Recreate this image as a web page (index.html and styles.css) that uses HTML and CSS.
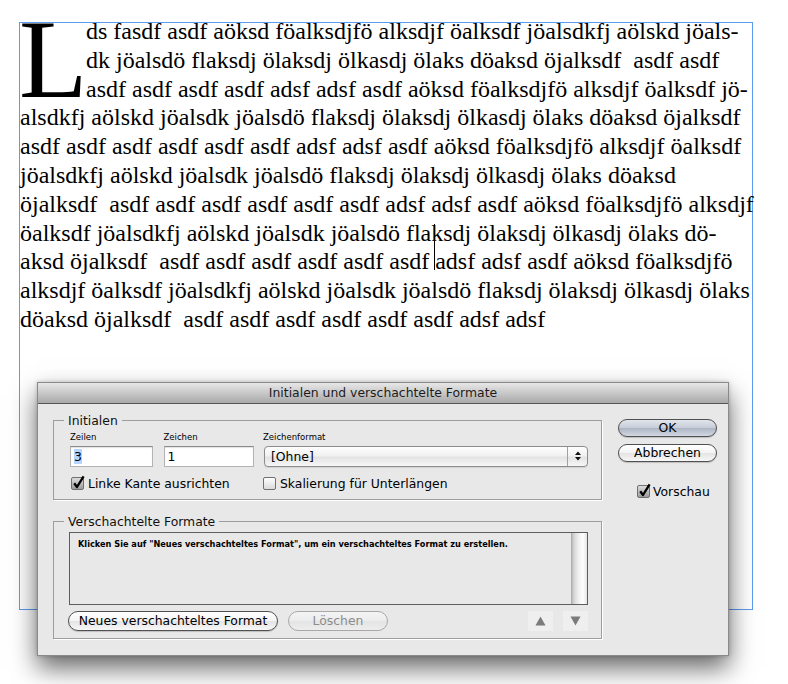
FILE: index.html
```html
<!DOCTYPE html>
<html lang="de">
<head>
    <meta charset="UTF-8">
    <meta name="viewport" content="width=device-width, initial-scale=1.0">
    <title>Initialen und verschachtelte Formate</title>

    <link rel="stylesheet" href="styles.css">
</head>
<body>
    <div class="text-frame">
        <div class="story">
            <span class="initial">L</span>
            <span class="ln">ds fasdf asdf aöksd föalksdjfö alksdjf öalksdf jöalsdkfj aölskd jöals-</span>
            <span class="ln">dk jöalsdö flaksdj ölaksdj ölkasdj ölaks döaksd öjalksdf  asdf asdf</span>
            <span class="ln">asdf asdf asdf asdf adsf adsf asdf aöksd föalksdjfö alksdjf öalksdf jö-</span>
            <span class="ln">alsdkfj aölskd jöalsdk jöalsdö flaksdj ölaksdj ölkasdj ölaks döaksd öjalksdf</span>
            <span class="ln">asdf asdf asdf asdf asdf asdf adsf adsf asdf aöksd föalksdjfö alksdjf öalksdf</span>
            <span class="ln">jöalsdkfj aölskd jöalsdk jöalsdö flaksdj ölaksdj ölkasdj ölaks döaksd</span>
            <span class="ln">öjalksdf  asdf asdf asdf asdf asdf asdf adsf adsf asdf aöksd föalksdjfö alksdjf</span>
            <span class="ln">öalksdf jöalsdkfj aölskd jöalsdk jöalsdö flaksdj ölaksdj ölkasdj ölaks dö-</span>
            <span class="ln">aksd öjalksdf  asdf asdf asdf asdf asdf asdf adsf adsf asdf aöksd föalksdjfö</span>
            <span class="ln">alksdjf öalksdf jöalsdkfj aölskd jöalsdk jöalsdö flaksdj ölaksdj ölkasdj ölaks</span>
            <span class="ln">döaksd öjalksdf  asdf asdf asdf asdf asdf asdf adsf adsf</span>
        </div>
    </div>
    <div class="caret"></div>

    <div class="dialog">
        <div class="titlebar">Initialen und verschachtelte Formate</div>
        <div class="dialog-body">
            <div class="groups">
                <fieldset class="group">
                    <legend>Initialen</legend>
                    <div class="group-inner initials">
                        <div class="fields">
                            <div class="field">
                                <span class="cap">Zeilen</span>
                                <span class="textbox"><span class="sel">3</span></span>
                            </div>
                            <div class="field">
                                <span class="cap">Zeichen</span>
                                <span class="textbox">1</span>
                            </div>
                            <div class="field">
                                <span class="cap cap-shift">Zeichenformat</span>
                                <span class="popup">
                                    <span class="popup-value">[Ohne]</span>
                                    <span class="popup-arrows">
                                        <svg width="6" height="10" viewBox="0 0 6 10"><polygon points="0,4 3,0.5 6,4" fill="#111"/><polygon points="0,6 3,9.5 6,6" fill="#111"/></svg>
                                    </span>
                                </span>
                            </div>
                        </div>
                        <div class="checks">
                            <span class="check">
                                <span class="box checked">
                                    <svg class="tick" width="13" height="15" viewBox="0 0 13 15"><path d="M2.2 8.2 L5 12 L11.6 1.4" fill="none" stroke="#000" stroke-width="2.3" stroke-linejoin="round"/></svg>
                                </span>
                                Linke Kante ausrichten
                            </span>
                            <span class="check">
                                <span class="box"></span>
                                Skalierung für Unterlängen
                            </span>
                        </div>
                    </div>
                </fieldset>

                <fieldset class="group">
                    <legend>Verschachtelte Formate</legend>
                    <div class="group-inner nested">
                        <div class="list">
                            <div class="list-msg">Klicken Sie auf "Neues verschachteltes Format", um ein verschachteltes Format zu erstellen.</div>
                            <div class="scroll"></div>
                        </div>
                        <div class="actions">
                            <button class="pill btn-new">Neues verschachteltes Format</button>
                            <button class="pill btn-del" disabled>Löschen</button>
                            <span class="move">
                                <svg width="11" height="10" viewBox="0 0 11 10"><polygon points="0.5,9.5 5.5,0.5 10.5,9.5" fill="#7b7b7b"/></svg>
                            </span>
                            <span class="move">
                                <svg width="11" height="10" viewBox="0 0 11 10"><polygon points="0.5,0.5 5.5,9.5 10.5,0.5" fill="#7b7b7b"/></svg>
                            </span>
                        </div>
                    </div>
                </fieldset>
            </div>

            <div class="side">
                <button class="pill default">OK</button>
                <button class="pill">Abbrechen</button>
                <span class="check preview">
                    <span class="box checked">
                        <svg class="tick" width="13" height="15" viewBox="0 0 13 15"><path d="M2.2 8.2 L5 12 L11.6 1.4" fill="none" stroke="#000" stroke-width="2.3" stroke-linejoin="round"/></svg>
                    </span>
                    Vorschau
                </span>
            </div>
        </div>
    </div>
</body>
</html>
```

FILE: styles.css
```css
body {
    margin: 0;
    background: #fff;
}

/* text frame with the drop cap */
.text-frame {
    margin: 22px 0 0 19px;
    width: 732px;
    height: 586px;
    border: 1px solid #5b9bf0;
}
.story {
    margin-top: -6px;
    font-family: "Liberation Serif", "Times New Roman", serif;
    font-size: 24px;
    line-height: 28.8px;
    color: #000;
}
.initial {
    float: left;
    width: 67px;
    margin-left: -1px;
    font-size: 112px;
    line-height: 85px;
}
.ln {
    display: block;
    white-space: pre;
}
.caret {
    position: absolute;
    left: 434px;
    top: 224px;
    width: 1px;
    height: 46px;
    background: #000;
}

/* dialog window */
.dialog {
    position: absolute;
    left: 37px;
    top: 382px;
    width: 692px;
    height: 274px;
    box-sizing: border-box;
    border: 1px solid #8a8a8a;
    background: #e8e8e8;
    box-shadow: 0 12px 24px rgba(0, 0, 0, 0.6), 0 0 4px rgba(0, 0, 0, 0.2);
    font-family: "DejaVu Sans", sans-serif;
    font-size: 12.4px;
    color: #000;
}
.titlebar {
    height: 20px;
    line-height: 20px;
    border-bottom: 1px solid #565656;
    background: linear-gradient(#e7e7e7, #a9a9a9);
    text-align: center;
    color: #1c1c1c;
}
.dialog-body {
    display: flex;
    gap: 16px;
    padding: 8.5px 10px 0 15px;
}
.groups {
    width: 549px;
}
.group {
    margin: 0;
    padding: 0;
    min-width: 0;
    border: 1px solid #9d9d9d;
    box-shadow: 1px 1px 0 #fff;
}
.group + .group {
    margin-top: 13.5px;
}
.group legend {
    margin-left: 10px;
    padding: 0 4px;
    line-height: 15px;
    color: #111;
}
.initials {
    padding: 4px 13px 8px 16px;
}
.nested {
    padding: 3.5px 13px 7px 15px;
}

.fields {
    display: grid;
    grid-template-columns: 83px 90px 324px;
    justify-content: space-between;
}
.field {
    display: flex;
    flex-direction: column;
}
.cap {
    font-size: 8.5px;
    line-height: 11px;
    margin-bottom: 3px;
}
.cap-shift {
    margin-left: -1px;
}
.textbox {
    height: 21px;
    box-sizing: border-box;
    padding: 0 3px;
    border: 1px solid #b3b3b3;
    border-top-color: #8c8c8c;
    background: #fff;
    line-height: 19px;
    box-shadow: inset 0 1px 1px rgba(0, 0, 0, 0.12);
}
.sel {
    background: #b5d5ff;
}
.popup {
    display: flex;
    height: 21px;
    box-sizing: border-box;
    border: 1px solid #8c8c8c;
    border-radius: 4px;
    background: linear-gradient(#fefefe, #f1f1f1 45%, #e3e3e3 55%, #f7f7f7);
    line-height: 19px;
    box-shadow: 0 1px 1px rgba(0, 0, 0, 0.1);
}
.popup-value {
    flex: 1;
    padding-left: 6px;
}
.popup-arrows {
    width: 19px;
    display: flex;
    align-items: center;
    justify-content: center;
    border-left: 1px solid #a0a0a0;
}

.checks {
    display: grid;
    grid-template-columns: 193px 1fr;
    margin-top: 9.5px;
    line-height: 15px;
}
.check {
    display: flex;
    align-items: center;
    gap: 4px;
    line-height: 15px;
}
.checks .check:first-child {
    margin-left: 1px;
}
.box {
    position: relative;
    width: 13px;
    height: 13px;
    box-sizing: border-box;
    border: 1px solid #707070;
    border-radius: 2px;
    background: linear-gradient(#fefefe, #dadada);
}
.box.checked {
    background: linear-gradient(#dcdcdc, #9c9c9c);
}
.tick {
    position: absolute;
    left: 0;
    top: -3px;
}

/* right column */
.side {
    width: 99px;
    display: flex;
    flex-direction: column;
    padding-top: 6.5px;
}
.pill {
    display: block;
    box-sizing: border-box;
    height: 18px;
    margin: 0 0 7px;
    padding: 0;
    border: 1px solid #505050;
    border-radius: 10px;
    background: linear-gradient(#ffffff, #f4f4f4 50%, #e4e4e4 52%, #f7f7f7);
    font: inherit;
    line-height: 16px;
    color: #000;
    text-align: center;
    box-shadow: 0 1px 1px rgba(0, 0, 0, 0.18);
}
.pill.default {
    background: linear-gradient(#e1e5ec, #c6ccd7 50%, #adb6c5 52%, #d2d8e2);
}
.preview {
    margin: 15px 0 0 19px;
    gap: 3px;
}

/* nested styles list */
.list {
    display: flex;
    height: 73px;
    box-sizing: border-box;
    border: 1px solid #5d5d5d;
}
.list-msg {
    flex: 1;
    padding: 5px 8px;
    font-size: 8.2px;
    font-weight: bold;
    line-height: 12px;
}
.scroll {
    width: 16px;
    background: linear-gradient(to right, #a9a9a9, #d6d6d6 3px, #f2f2f2 8px, #fff 12px, #e4e4e4);
}
.actions {
    display: flex;
    align-items: center;
    height: 20px;
    margin-top: 6px;
}
.actions .pill {
    height: 20px;
    margin: 0;
    line-height: 18px;
}
.btn-new {
    width: 210px;
    margin-left: -1px !important;
}
.btn-del {
    width: 100px;
    margin-left: 10px !important;
}
.pill[disabled] {
    border-color: #a8a8a8;
    color: #8c8c8c;
    background: linear-gradient(#f4f4f4, #ececec 50%, #e4e4e4 52%, #ededed);
    box-shadow: none;
}
.move {
    width: 25px;
    height: 20px;
    display: flex;
    align-items: center;
    justify-content: center;
    background: #efefef;
    margin-left: auto;
}
.move + .move {
    margin-left: 10px;
}
```
